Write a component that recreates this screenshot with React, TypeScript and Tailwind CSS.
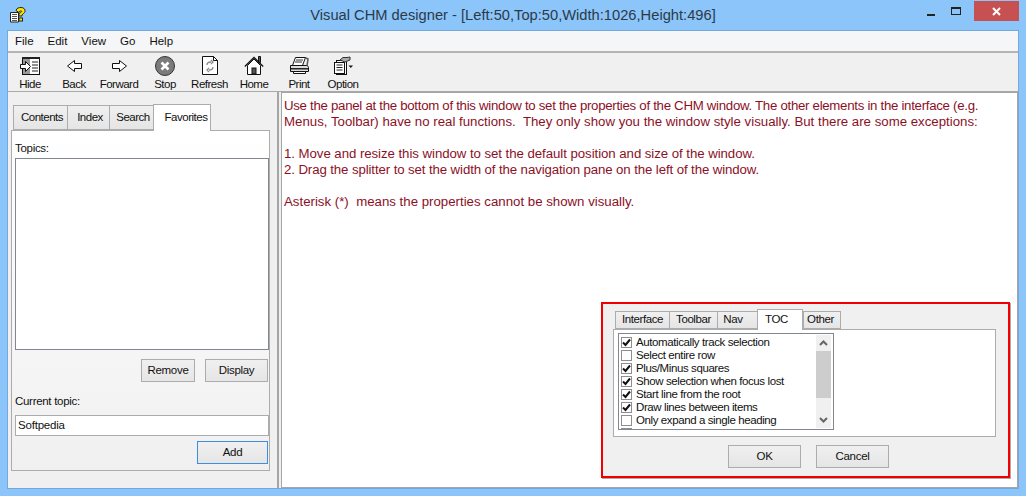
import React from "react";

const font = { fontFamily: '"Liberation Sans", sans-serif' };

function HideIcon() {
  return (
    <svg width="22" height="20" viewBox="0 0 22 20" fill="none">
      <rect x="3.5" y="1.5" width="17" height="17" fill="#fff" stroke="#111" />
      <rect x="3" y="1" width="18" height="2" fill="#222" />
      <rect x="4" y="3" width="7" height="15" fill="#9a9a9a" />
      <path d="M13 6h6M13 9h6M13 12h6M13 15h6" stroke="#222" />
      <path d="M1.5 8.5h5v-3l5 5-5 5v-3h-5z" fill="#fff" stroke="#111" />
    </svg>
  );
}

function BackIcon() {
  return (
    <svg width="17" height="14" viewBox="0 0 17 14" fill="none">
      <path d="M8.5 1.5L1.5 7l7 5.5V9.5h7v-5h-7z" fill="#fff" stroke="#111" />
    </svg>
  );
}

function ForwardIcon() {
  return (
    <svg width="17" height="14" viewBox="0 0 17 14" fill="none">
      <path d="M8.5 1.5L15.5 7l-7 5.5V9.5h-7v-5h7z" fill="#fff" stroke="#111" />
    </svg>
  );
}

function StopIcon() {
  return (
    <svg width="20" height="20" viewBox="0 0 20 20" fill="none">
      <circle cx="10" cy="10" r="9.5" fill="#7b7b7b" stroke="#333" />
      <path d="M6.5 6.5l7 7M13.5 6.5l-7 7" stroke="#fff" strokeWidth="2.6" />
    </svg>
  );
}

function RefreshIcon() {
  return (
    <svg width="18" height="21" viewBox="0 0 18 21" fill="none">
      <path d="M1.5 1.5h11l4 4v14h-15z" fill="#fff" stroke="#111" />
      <path d="M12.5 1.5v4h4" stroke="#111" />
      <path d="M6 10c0-2 1.500-3 4-3M10 5l2 2-2 2M12 12c0 2-1.500 3-4 3M8 17l-2-2 2-2" stroke="#888" strokeWidth="1.300" />
    </svg>
  );
}

function HomeIcon() {
  return (
    <svg width="20" height="21" viewBox="0 0 20 21" fill="none">
      <path d="M14.500 1.500h2v6h-2z" fill="#555" stroke="#111" />
      <path d="M3.500 10.500v9h13v-9L10 4z" fill="#fff" stroke="#111" />
      <path d="M.8 11.500L10 2.500l9.200 9" stroke="#111" strokeWidth="1.300" />
      <rect x="8" y="13" width="4" height="6" fill="#555" stroke="#111" />
    </svg>
  );
}

function PrintIcon() {
  return (
    <svg width="21" height="19" viewBox="0 0 21 19" fill="none">
      <path d="M6.500 1.500h10l-3 8h-10z" fill="#fff" stroke="#111" />
      <path d="M7 4h7M6 6h7" stroke="#333" />
      <path d="M1.500 9.500h17l1 2v4h-18z" fill="#ddd" stroke="#111" />
      <rect x="2" y="12" width="17" height="1.500" fill="#222" />
      <path d="M4.500 15.500h12v2h-12z" fill="#fff" stroke="#111" />
      <path d="M17 2l2 1-1 7" stroke="#555" strokeWidth="1.500" />
    </svg>
  );
}

function OptionIcon() {
  return (
    <svg width="20" height="20" viewBox="0 0 20 20" fill="none">
      <rect x="3.500" y="4.500" width="10" height="14" fill="#fff" stroke="#111" />
      <rect x="1.500" y="6.500" width="10" height="11" fill="#fff" stroke="#111" />
      <path d="M3.500 9h6M3.500 11.500h6M3.500 14h6" stroke="#222" />
      <path d="M7 4l3-2.500h4L17 1v3l-5 2z" fill="#aaa" stroke="#333" />
      <path d="M15.500 9.500h4.500l-2.250 2.500z" fill="#111" />
    </svg>
  );
}

function HelpIcon() {
  return (
    <svg width="16" height="16" viewBox="0 0 16 16" fill="none">
      <path d="M.5 5.500h8v9.500h-8z" fill="#fff" stroke="#222" />
      <path d="M2 7.500h5M2 9.500h5M2 11.500h5M2 13.500h5" stroke="#555" />
      <path d="M6 3.500C6.500 1 9 .5 11 .5c2.500 0 4.500 1.500 4 4-.4 1.800-2.500 2.200-3 3.500v1h-3V7.500c0-1.500 2.500-2 2.700-3 .1-.6-1.700-.8-2.200 0L9 5.500z" fill="#ffe400" stroke="#222" />
      <rect x="9" y="11" width="3.500" height="3" fill="#ffe400" stroke="#222" />
    </svg>
  );
}

const tools = [
  { label: "Hide", icon: <HideIcon />, w: "w-[44px]" },
  { label: "Back", icon: <BackIcon />, w: "w-[44px]" },
  { label: "Forward", icon: <ForwardIcon />, w: "w-[46px]" },
  { label: "Stop", icon: <StopIcon />, w: "w-[46px]" },
  { label: "Refresh", icon: <RefreshIcon />, w: "w-[43px]" },
  { label: "Home", icon: <HomeIcon />, w: "w-[46px]" },
  { label: "Print", icon: <PrintIcon />, w: "w-[44px]" },
  { label: "Option", icon: <OptionIcon />, w: "w-[44px]" },
];

const tocItems = [
  { label: "Automatically track selection", on: true },
  { label: "Select entire row", on: false },
  { label: "Plus/Minus squares", on: true },
  { label: "Show selection when focus lost", on: true },
  { label: "Start line from the root", on: true },
  { label: "Draw lines between items", on: true },
  { label: "Only expand a single heading", on: false },
  { label: "Tooltip info on items", on: false },
];

function Tab({ label, width, active }: { label: string; width: string; active?: boolean }) {
  if (active) {
    return (
      <div className={`${width} h-[27px] -mb-px z-10 bg-white border border-b-0 border-[#acacac] flex items-start justify-center pt-[4px] pl-[8px] text-[11.500px] tracking-[-0.500px]`}>
        {label}
      </div>
    );
  }
  return (
    <div className={`${width} h-[25px] border border-[#acacac] -mr-px bg-gradient-to-b from-[#f0f0f0] to-[#e5e5e5] flex items-center justify-center pt-[1px] pl-[3px] text-[11.500px] tracking-[-0.500px]`}>
      {label}
    </div>
  );
}

function SmallTab({ label, width, active, inner = "" }: { label: string; width: string; active?: boolean; inner?: string }) {
  if (active) {
    return (
      <div className={`${width} h-[21px] -mb-px z-10 bg-white border border-b-0 border-[#acacac] flex items-start justify-center pt-[1px] pr-[7px] text-[11.500px] tracking-[-0.300px]`}>
        {label}
      </div>
    );
  }
  return (
    <div className={`${width} ${inner} h-[18px] border border-[#acacac] -mr-px bg-gradient-to-b from-[#f0f0f0] to-[#e5e5e5] flex items-center justify-center text-[11.500px] tracking-[-0.400px]`}>
      {label}
    </div>
  );
}

function Button({ label, width, focus }: { label: string; width: string; focus?: boolean }) {
  return (
    <div className={`${width} h-[23px] border ${focus ? "border-[#3c8fe0]" : "border-[#acacac]"} bg-gradient-to-b from-[#f0f0f0] to-[#e5e5e5] flex items-center justify-center text-[11.500px] tracking-[-0.300px]`}>
      {label}
    </div>
  );
}

function Check({ on }: { on: boolean }) {
  return (
    <div className="w-[11px] h-[11px] bg-white border border-[#8e8e8e] flex items-center justify-center shrink-0">
      {on && (
        <svg width="9" height="9" viewBox="0 0 9 9" fill="none">
          <path d="M1 4.500l2.500 2.500L8 1.500" stroke="#111" strokeWidth="2" />
        </svg>
      )}
    </div>
  );
}

export default function App() {
  return (
    <div style={font} className="w-[1026px] h-[496px] overflow-hidden bg-[#8bc5f9] flex flex-col text-[#111] relative">
      {/* title bar */}
      <div className="h-[30px] flex items-center shrink-0 relative">
        <div className="ml-[10px]"><HelpIcon /></div>
        <div className="flex-1 text-center text-[14.700px] text-[#2c3a48] pr-[26px] pt-[1px]">
          Visual CHM designer - [Left:50,Top:50,Width:1026,Height:496]
        </div>
        <div className="absolute right-[7px] top-[1px] flex items-start">
          <div className="w-[26px] h-[20px] flex items-end justify-center pb-[5px]"><div className="w-[8px] h-[2px] bg-[#222]" /></div>
          <div className="w-[26px] h-[20px] flex items-center justify-center ml-[-1px] mr-[5px]"><div className="w-[10px] h-[8px] border border-t-2 border-[#222]" /></div>
          <div className="w-[45px] h-[20px] bg-[#c75050] flex items-center justify-center">
            <svg width="9" height="9" viewBox="0 0 9 9"><path d="M1 1l7 7M8 1L1 8" stroke="#fff" strokeWidth="2" /></svg>
          </div>
        </div>
      </div>

      {/* client area */}
      <div className="flex-1 mx-[7px] mb-[7px] border border-[#76a9da] flex flex-col min-h-0 bg-[#f0f0f0]">
        <div className="h-[20px] bg-[#f5f6f7] flex items-center gap-[14px] pl-[7px] pt-[1px] text-[11.500px] shrink-0">
          <span>File</span>
          <span>Edit</span>
          <span>View</span>
          <span>Go</span>
          <span>Help</span>
        </div>
        <div className="h-[41px] border-t-2 border-b border-[#a9a9a9] border-t-[#b5b5b5] flex shrink-0">
          {tools.map((t) => (
            <div key={t.label} className={`${t.w} flex flex-col items-center`}>
              <div className="h-[22px] mt-[2px] flex items-center justify-center">{t.icon}</div>
              <span className="text-[11.500px] tracking-[-0.500px] leading-[14px] mt-[1px]">{t.label}</span>
            </div>
          ))}
        </div>

        <div className="flex-1 flex min-h-0">
          {/* navigation pane */}
          <div className="w-[269px] shrink-0 pt-[12px] pl-[3px] pr-[7px] pb-[17px] flex flex-col">
            <div className="flex items-end pl-[2px] h-[26px] shrink-0">
              <Tab label="Contents" width="w-[55px]" />
              <Tab label="Index" width="w-[43px]" />
              <Tab label="Search" width="w-[45px]" />
              <Tab label="Favorites" width="w-[58px]" active />
            </div>
            <div className="flex-1 border border-[#acacac] px-[3px] flex flex-col min-h-0 bg-gradient-to-b from-white to-[#f0f0f0]">
              <div className="text-[11.500px] tracking-[-0.300px] mt-[10px] h-[17px] leading-[14px]">Topics:</div>
              <div className="w-[254px] h-[192px] bg-white border border-[#82878f]" />
              <div className="flex justify-end gap-[10px] mt-[9px] w-[253px]">
                <Button label="Remove" width="w-[54px]" />
                <Button label="Display" width="w-[63px]" />
              </div>
              <div className="text-[11.500px] tracking-[-0.300px] mt-[12px] leading-[14px]">Current topic:</div>
              <div className="w-[254px] h-[21px] mt-[7px] bg-white border border-[#acacac] text-[11.500px] tracking-[-0.200px] flex items-center pl-[2px]">Softpedia</div>
              <div className="flex justify-end mt-[5px] w-[253px]">
                <Button label="Add" width="w-[71px]" focus />
              </div>
            </div>
          </div>

          {/* splitter */}
          <div className="w-[2px] bg-[#a5a5a5] shrink-0" />

          {/* content pane */}
          <div className="flex-1 ml-[2px] bg-white border border-[#a5a5a5] min-w-0 pl-[2px] pt-[5px] text-[13.250px] leading-[16px] text-[#8b0f1f]">
            <p className="whitespace-nowrap tracking-[-0.290px]">Use the panel at the bottom of this window to set the properties of the CHM window. The other elements in the interface (e.g.</p>
            <p className="whitespace-pre">Menus, Toolbar) have no real functions.  They only show you the window style visually. But there are some exceptions:</p>
            <p className="whitespace-pre mt-[16px] tracking-[-0.060px]">1. Move and resize this window to set the default position and size of the window.</p>
            <p className="whitespace-pre tracking-[-0.110px]">2. Drag the splitter to set the width of the navigation pane on the left of the window.</p>
            <p className="whitespace-pre mt-[16px]">Asterisk (*)  means the properties cannot be shown visually.</p>
          </div>
        </div>
      </div>

      {/* properties panel */}
      <div className="absolute left-[601px] top-[302px] w-[409px] h-[176px] border-2 border-[#f00000] bg-[#f0f0f0] text-[#111] pl-[10px] pt-[5px] flex flex-col shadow-[1px_1px_0_#aaa]">
        <div className="flex items-end h-[20px] pl-[2px] shrink-0">
          <SmallTab label="Interface" width="w-[55px]" />
          <SmallTab label="Toolbar" width="w-[49px]" />
          <SmallTab label="Nav" width="w-[41px]" inner="pr-[9px]" />
          <SmallTab label="TOC" width="w-[46px]" active />
          <SmallTab label="Other" width="w-[38px]" inner="pr-[3px]" />
        </div>
        <div className="w-[383px] h-[108px] border border-[#acacac] bg-white pl-[4px] pt-[3px] shrink-0">
          <div className="w-[216px] h-[97px] border border-[#82878f] flex overflow-hidden">
            <div className="flex-1 pl-[2px] pt-[2px] overflow-hidden">
              {tocItems.map((item) => (
                <div key={item.label} className="h-[13px] flex items-center gap-[4px] text-[11.500px] tracking-[-0.400px] whitespace-nowrap">
                  <Check on={item.on} />
                  <span>{item.label}</span>
                </div>
              ))}
            </div>
            <div className="w-[15px] my-[1px] mr-[2px] bg-[#f0f0f0] flex flex-col items-center shrink-0">
              <div className="h-[16px] flex items-center justify-center">
                <svg width="9" height="6" viewBox="0 0 9 6" fill="none"><path d="M1 5l3.500-3.500L8 5" stroke="#666" strokeWidth="2" /></svg>
              </div>
              <div className="w-full h-[47px] bg-[#cdcdcd]" />
              <div className="flex-1" />
              <div className="h-[16px] flex items-center justify-center">
                <svg width="9" height="6" viewBox="0 0 9 6" fill="none"><path d="M1 1l3.500 3.500L8 1" stroke="#666" strokeWidth="2" /></svg>
              </div>
            </div>
          </div>
        </div>
        <div className="flex gap-[15px] ml-[115px] mt-[8px]">
          <Button label="OK" width="w-[73px]" />
          <Button label="Cancel" width="w-[73px]" />
        </div>
      </div>
    </div>
  );
}
